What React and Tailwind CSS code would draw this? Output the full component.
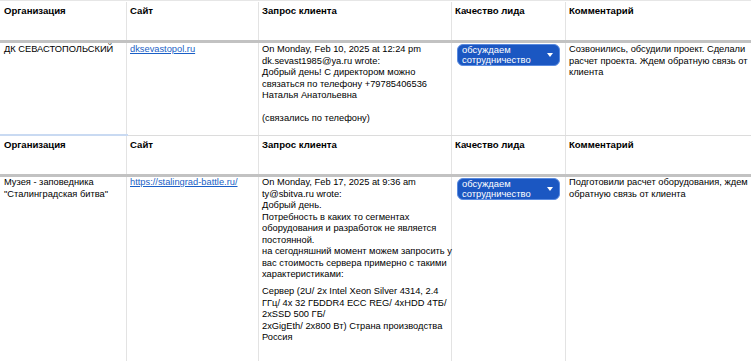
import React from "react";

const cols = "grid grid-cols-[127px_132px_193px_114px_1fr]";
const font = { fontFamily: '"Liberation Sans", Arial, sans-serif' };

function Header() {
  const names = ["Организация", "Сайт", "Запрос клиента", "Качество лида", "Комментарий"];
  return (
    <div className={`${cols} h-[38px]`}>
      {names.map((n, i) => (
        <div
          key={n}
          className={`font-bold text-[9.6px] pt-[3px] ${i === 0 ? "pl-[4px]" : "pl-[3px]"} ${i < 4 ? "border-r border-[#e3e3e3]" : ""}`}
        >
          {n}
        </div>
      ))}
    </div>
  );
}

function Chip() {
  return (
    <div className="ml-[5px] mt-[1px] w-[103px] h-[22px] rounded-[6px] bg-[#1b57c2] border border-[#5a8be0] text-white flex items-center pl-[4px] pr-[6px] leading-[10.5px] text-[9.4px]">
      <div className="flex-1">
        обсуждаем
        <br />
        сотрудничество
      </div>
      <svg width="6" height="4" viewBox="0 0 6 4" className="shrink-0">
        <path d="M0 0 L6 0 L3 4 Z" fill="#ffffff" />
      </svg>
    </div>
  );
}

function Lines({ lines }) {
  return (
    <div>
      {lines.map((l, i) =>
        l === "" ? <div key={i} className="h-[11.5px]" /> : <div key={i} className="whitespace-nowrap">{l}</div>
      )}
    </div>
  );
}

export default function App() {
  return (
    <div className="w-[751px] h-[361px] bg-white text-black overflow-hidden text-[9.3px] leading-[11.5px]" style={font}>
      {/* Table 1 */}
      <div className="pt-[1px] border-t border-[#e6e6e6]">
        <Header />
        <div className="h-[3px] bg-[#c2c2c2]" />
        <div className={`${cols} h-[92px]`}>
          <div className="pl-[4px] pt-[1px] border-r border-[#e3e3e3] whitespace-nowrap">ДК СЕВАСТОПОЛЬСКИЙ</div>
          <div className="pl-[3px] pt-[1px] border-r border-[#e3e3e3]">
            <span className="text-[#1a5fc6] underline">dksevastopol.ru</span>
          </div>
          <div className="pl-[3px] pt-[1px] border-r border-[#e3e3e3]">
            <Lines
              lines={[
                "On Monday, Feb 10, 2025 at 12:24 pm",
                "dk.sevast1985@ya.ru wrote:",
                "Добрый день! С директором можно",
                "связаться по телефону +79785406536",
                "Наталья Анатольевна",
                "",
                "(связались по телефону)",
              ]}
            />
          </div>
          <div className="border-r border-[#e3e3e3]">
            <Chip />
          </div>
          <div className="pl-[3px] pt-[1px]">
            <Lines
              lines={[
                "Созвонились, обсудили проект. Сделали",
                "расчет проекта. Ждем обратную связь от",
                "клиента",
              ]}
            />
          </div>
        </div>
      </div>

      {/* Table 2 */}
      <div className="relative border-t border-[#dcdcdc]">
        <div className="absolute left-0 -top-[2px] w-[128px] h-[2px] bg-[#c9daf2]" />
        <Header />
        <div className="h-[3px] bg-[#c2c2c2]" />
        <div className={`${cols} h-[200px]`}>
          <div className="pl-[4px] border-r border-[#e3e3e3]">
            <Lines lines={["Музея - заповедника", "\"Сталинградская битва\""]} />
          </div>
          <div className="pl-[3px] border-r border-[#e3e3e3]">
            <span className="text-[#1a5fc6] underline">https://stalingrad-battle.ru/</span>
          </div>
          <div className="pl-[3px] border-r border-[#e3e3e3]">
            <Lines
              lines={[
                "On Monday, Feb 17, 2025 at 9:36 am",
                "ty@sbitva.ru wrote:",
                "Добрый день.",
                "Потребность в каких то сегментах",
                "оборудования и разработок не является",
                "постоянной.",
                "на сегодняшний момент можем запросить у",
                "вас стоимость сервера примерно с такими",
                "характеристиками:",
              ]}
            />
            <div className="h-[5.5px]" />
            <Lines
              lines={[
                "Сервер (2U/ 2x Intel Xeon Silver 4314, 2.4",
                "ГГц/ 4x 32 ГБDDR4 ECC REG/ 4xHDD 4ТБ/",
                "2xSSD 500 ГБ/",
                "2xGigEth/ 2x800 Вт) Страна производства",
                "Россия",
              ]}
            />
          </div>
          <div className="border-r border-[#e3e3e3]">
            <Chip />
          </div>
          <div className="pl-[3px]">
            <Lines lines={["Подготовили расчет оборудования, ждем", "обратную связь от клиента"]} />
          </div>
        </div>
      </div>
    </div>
  );
}
